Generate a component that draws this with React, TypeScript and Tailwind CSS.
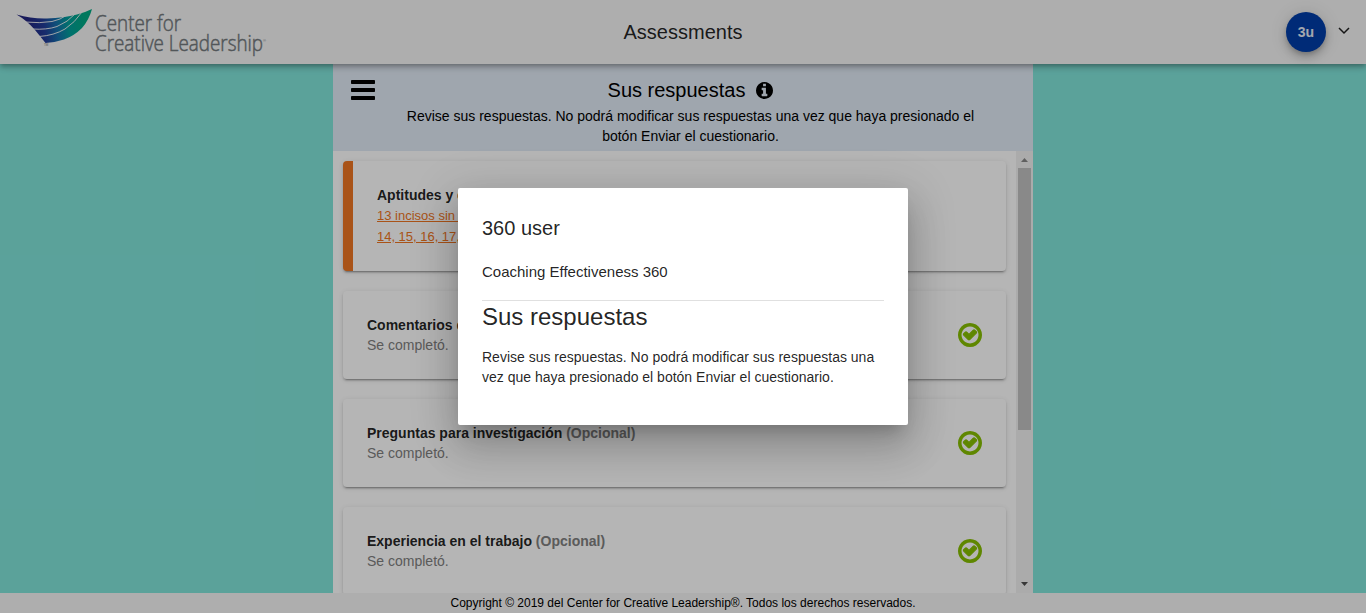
import React from "react";

const DISC =
  "M1536 896q0 209-103 385.500t-279.500 279.500-385.500 103-385.500-103-279.500-279.500-103-385.500 103-385.500 279.500-279.500 385.500-103 385.500 103 279.500 279.500 103 385.500z";

function CheckIcon() {
  return (
    <svg viewBox="0 128 1536 1536" className="size-6 shrink-0 fill-[#86be00]">
      <path
        className="stroke-[#86be00] stroke-[70]"
        transform="translate(0 50)"
        d="M1171 723l-422 422q-19 19-45 19t-45-19l-294-294q-19-19-19-45t19-45l102-102q19-19 45-19t45 19l147 147 275-275q19-19 45-19t45 19l102 102q19 19 19 45t-19 45z"
      />
      <path d="M1312 896q0-148-73-273t-198-198-273-73-273 73-198 198-73 273 73 273 198 198 273 73 273-73 198-198 73-273zm224 0q0 209-103 385.500t-279.500 279.500-385.500 103-385.500-103-279.500-279.500-103-385.500 103-385.500 279.500-279.500 385.500-103 385.500 103 279.500 279.500 103 385.500z" />
    </svg>
  );
}

function InfoIcon() {
  return (
    <svg viewBox="0 128 1536 1536" className="size-[17px]">
      <path
        fillRule="evenodd"
        d={
          "M1024 1376v-160q0-14-9-23t-23-9h-96v-512q0-14-9-23t-23-9h-320q-14 0-23 9t-9 23v160q0 14 9 23t23 9h96v320h-96q-14 0-23 9t-9 23v160q0 14 9 23t23 9h448q14 0 23-9t9-23zM896 480v-160q0-14-9-23t-23-9h-192q-14 0-23 9t-9 23v160q0 14 9 23t23 9h192q14 0 23-9t9-23z" +
          DISC
        }
      />
    </svg>
  );
}

function Logo() {
  return (
    <svg width="280" height="64" viewBox="0 0 280 64" className="shrink-0">
      <defs>
        <linearGradient id="wing" x1="28" x2="84" y1="26" y2="18" gradientUnits="userSpaceOnUse">
          <stop offset="0" stopColor="#242680" />
          <stop offset="0.28" stopColor="#223c98" />
          <stop offset="0.5" stopColor="#1670ac" />
          <stop offset="0.72" stopColor="#00a09b" />
          <stop offset="1" stopColor="#00a983" />
        </linearGradient>
      </defs>
      <path
        fill="url(#wing)"
        d="M16.500 14.500Q32 19 47 18.500Q64 18 77 14.500Q85 12.500 92 9Q89 20 82 28Q74 36 64 39.500Q55 42.500 45.500 43Q40 36 35 30Q27 20.500 16.500 14.500Z"
      />
      <g fill="none" stroke="#f5f5f5" strokeWidth="0.900">
        <path d="M25 22Q40 23.500 52 21.500Q61 19.500 66 15.500" />
        <path d="M32 29Q47 30 57 26.500Q68 22 75 14" />
        <path d="M39 36.500Q54 35.500 65 29Q75 22.500 82 12" />
      </g>
      <text x="44" y="46" fontSize="3" fill="#777" fontFamily="Liberation Sans, sans-serif">TM</text>
      <g
        fill="#747a7e"
        stroke="#747a7e"
        strokeWidth="0.500"
        fontFamily="Open Sans, sans-serif"
        fontWeight="300"
        fontSize="21.500"
      >
        <text x="95" y="30.800" textLength="86" lengthAdjust="spacingAndGlyphs">Center for</text>
        <text x="95" y="50.500" textLength="168" lengthAdjust="spacingAndGlyphs">Creative Leadership</text>
      </g>
      <text x="263" y="42" fontSize="4" fill="#7b8185" fontFamily="Liberation Sans, sans-serif">®</text>
    </svg>
  );
}

const cardShadow =
  "shadow-[0_3px_1px_-2px_rgba(0,0,0,0.2),0_2px_2px_0_rgba(0,0,0,0.14),0_1px_5px_0_rgba(0,0,0,0.12)]";

function DoneCard({ title, optional }: { title: string; optional?: boolean }) {
  return (
    <section className={`flex h-[88px] shrink-0 items-center justify-between rounded-sm bg-white px-6 ${cardShadow}`}>
      <div className="text-sm leading-5">
        <h3 className="font-bold text-black/87">
          {title} {optional && <span className="text-[#808080]">(Opcional)</span>}
        </h3>
        <p className="text-[#808080]">Se completó.</p>
      </div>
      <CheckIcon />
    </section>
  );
}

export default function App() {
  return (
    <div className="relative flex h-[613px] w-[1366px] flex-col overflow-hidden bg-[#80e4da] font-['Liberation_Sans',Arial,sans-serif] text-black">
      <header className="relative z-10 grid h-16 shrink-0 grid-cols-[1fr_auto_1fr] items-center bg-[#f5f5f5] shadow-[0_2px_4px_-1px_rgba(0,0,0,0.2),0_4px_5px_0_rgba(0,0,0,0.14),0_1px_10px_0_rgba(0,0,0,0.12)]">
        <Logo />
        <h1 className="text-xl text-black/87">Assessments</h1>
        <div className="flex items-center justify-end gap-3 pr-4">
          <div className="flex size-10 items-center justify-center rounded-full bg-[#003da8] text-sm font-bold text-white/90 shadow-[0_3px_5px_-1px_rgba(0,0,0,0.2),0_6px_10px_0_rgba(0,0,0,0.14),0_1px_18px_0_rgba(0,0,0,0.12)]">
            3u
          </div>
          <svg viewBox="0 0 12 8" className="mb-[3px] h-2 w-3 fill-none stroke-black/87 stroke-[1.500]">
            <path d="M1 1l5 5 5-5" />
          </svg>
        </div>
      </header>

      <main className="mx-auto flex min-h-0 w-[700px] flex-1 flex-col bg-white">
        <div className="flex h-[87px] shrink-0 bg-[#e1eaf5] pt-3">
          <button className="flex h-7 w-[60px] justify-center" aria-label="Menu">
            <svg viewBox="0 0 24 20" className="mt-1 h-5 w-6">
              <rect width="24" height="4" rx="0.800" />
              <rect y="8" width="24" height="4" rx="0.800" />
              <rect y="16" width="24" height="4" rx="0.800" />
            </svg>
          </button>
          <div className="flex-1 pr-[45px] text-center">
            <h2 className="mb-0.5 flex h-7 items-center justify-center gap-[11px] text-xl">
              Sus respuestas <InfoIcon />
            </h2>
            <p className="text-sm leading-5">
              Revise sus respuestas. No podrá modificar sus respuestas una vez que haya presionado el
              <br />
              botón Enviar el cuestionario.
            </p>
          </div>
        </div>

        <div className="flex min-h-0 flex-1">
          <div className="flex min-w-0 flex-1 flex-col gap-5 overflow-hidden p-2.5">
            <section className={`h-[110px] shrink-0 rounded-sm border-l-10 border-[#ee7623] bg-white px-6 pt-6 text-sm ${cardShadow}`}>
              <h3 className="leading-5 font-bold text-black/87">Aptitudes y conductas</h3>
              <p className="text-[13px] leading-[21px] text-[#ee7623] underline">
                13 incisos sin responder
                <br />
                <span className="tracking-[-0.02px]">14, 15, 16, 17, 18, 19</span>
              </p>
            </section>
            <DoneCard title="Comentarios del participante" />
            <DoneCard title="Preguntas para investigación" optional />
            <DoneCard title="Experiencia en el trabajo" optional />
          </div>
          <div className="flex w-[17px] flex-col items-center justify-between bg-[#f1f1f1]">
            <div className="flex flex-col items-center">
              <svg viewBox="0 0 17 17" className="size-[17px] fill-[#888]">
                <path d="M5 11h7L8.500 7z" />
              </svg>
              <div className="h-[262px] w-[13px] bg-[#c1c1c1]" />
            </div>
            <svg viewBox="0 0 17 17" className="size-[17px] fill-[#505050]">
              <path d="M5 6h7l-3.500 4z" />
            </svg>
          </div>
        </div>
      </main>

      <footer className="h-5 shrink-0 bg-[#f5f5f5] text-center text-xs leading-5">
        Copyright © 2019 del Center for Creative Leadership®. Todos los derechos reservados.
      </footer>

      <div className="absolute inset-0 z-20 flex items-center justify-center bg-black/29">
        <div
          role="dialog"
          className="h-[237px] w-[450px] rounded-xs bg-white p-6 text-black/87 shadow-[0_11px_15px_-7px_rgba(0,0,0,0.2),0_24px_38px_3px_rgba(0,0,0,0.14),0_9px_46px_8px_rgba(0,0,0,0.12)]"
        >
          <h2 className="text-xl leading-8">360 user</h2>
          <p className="mt-[18px] text-[15px] leading-5">Coaching Effectiveness 360</p>
          <hr className="mt-[18px] border-black/12" />
          <h3 className="text-2xl leading-8">Sus respuestas</h3>
          <p className="mt-[14px] text-sm leading-5">
            Revise sus respuestas. No podrá modificar sus respuestas una vez que haya presionado el botón Enviar el
            cuestionario.
          </p>
        </div>
      </div>
    </div>
  );
}
